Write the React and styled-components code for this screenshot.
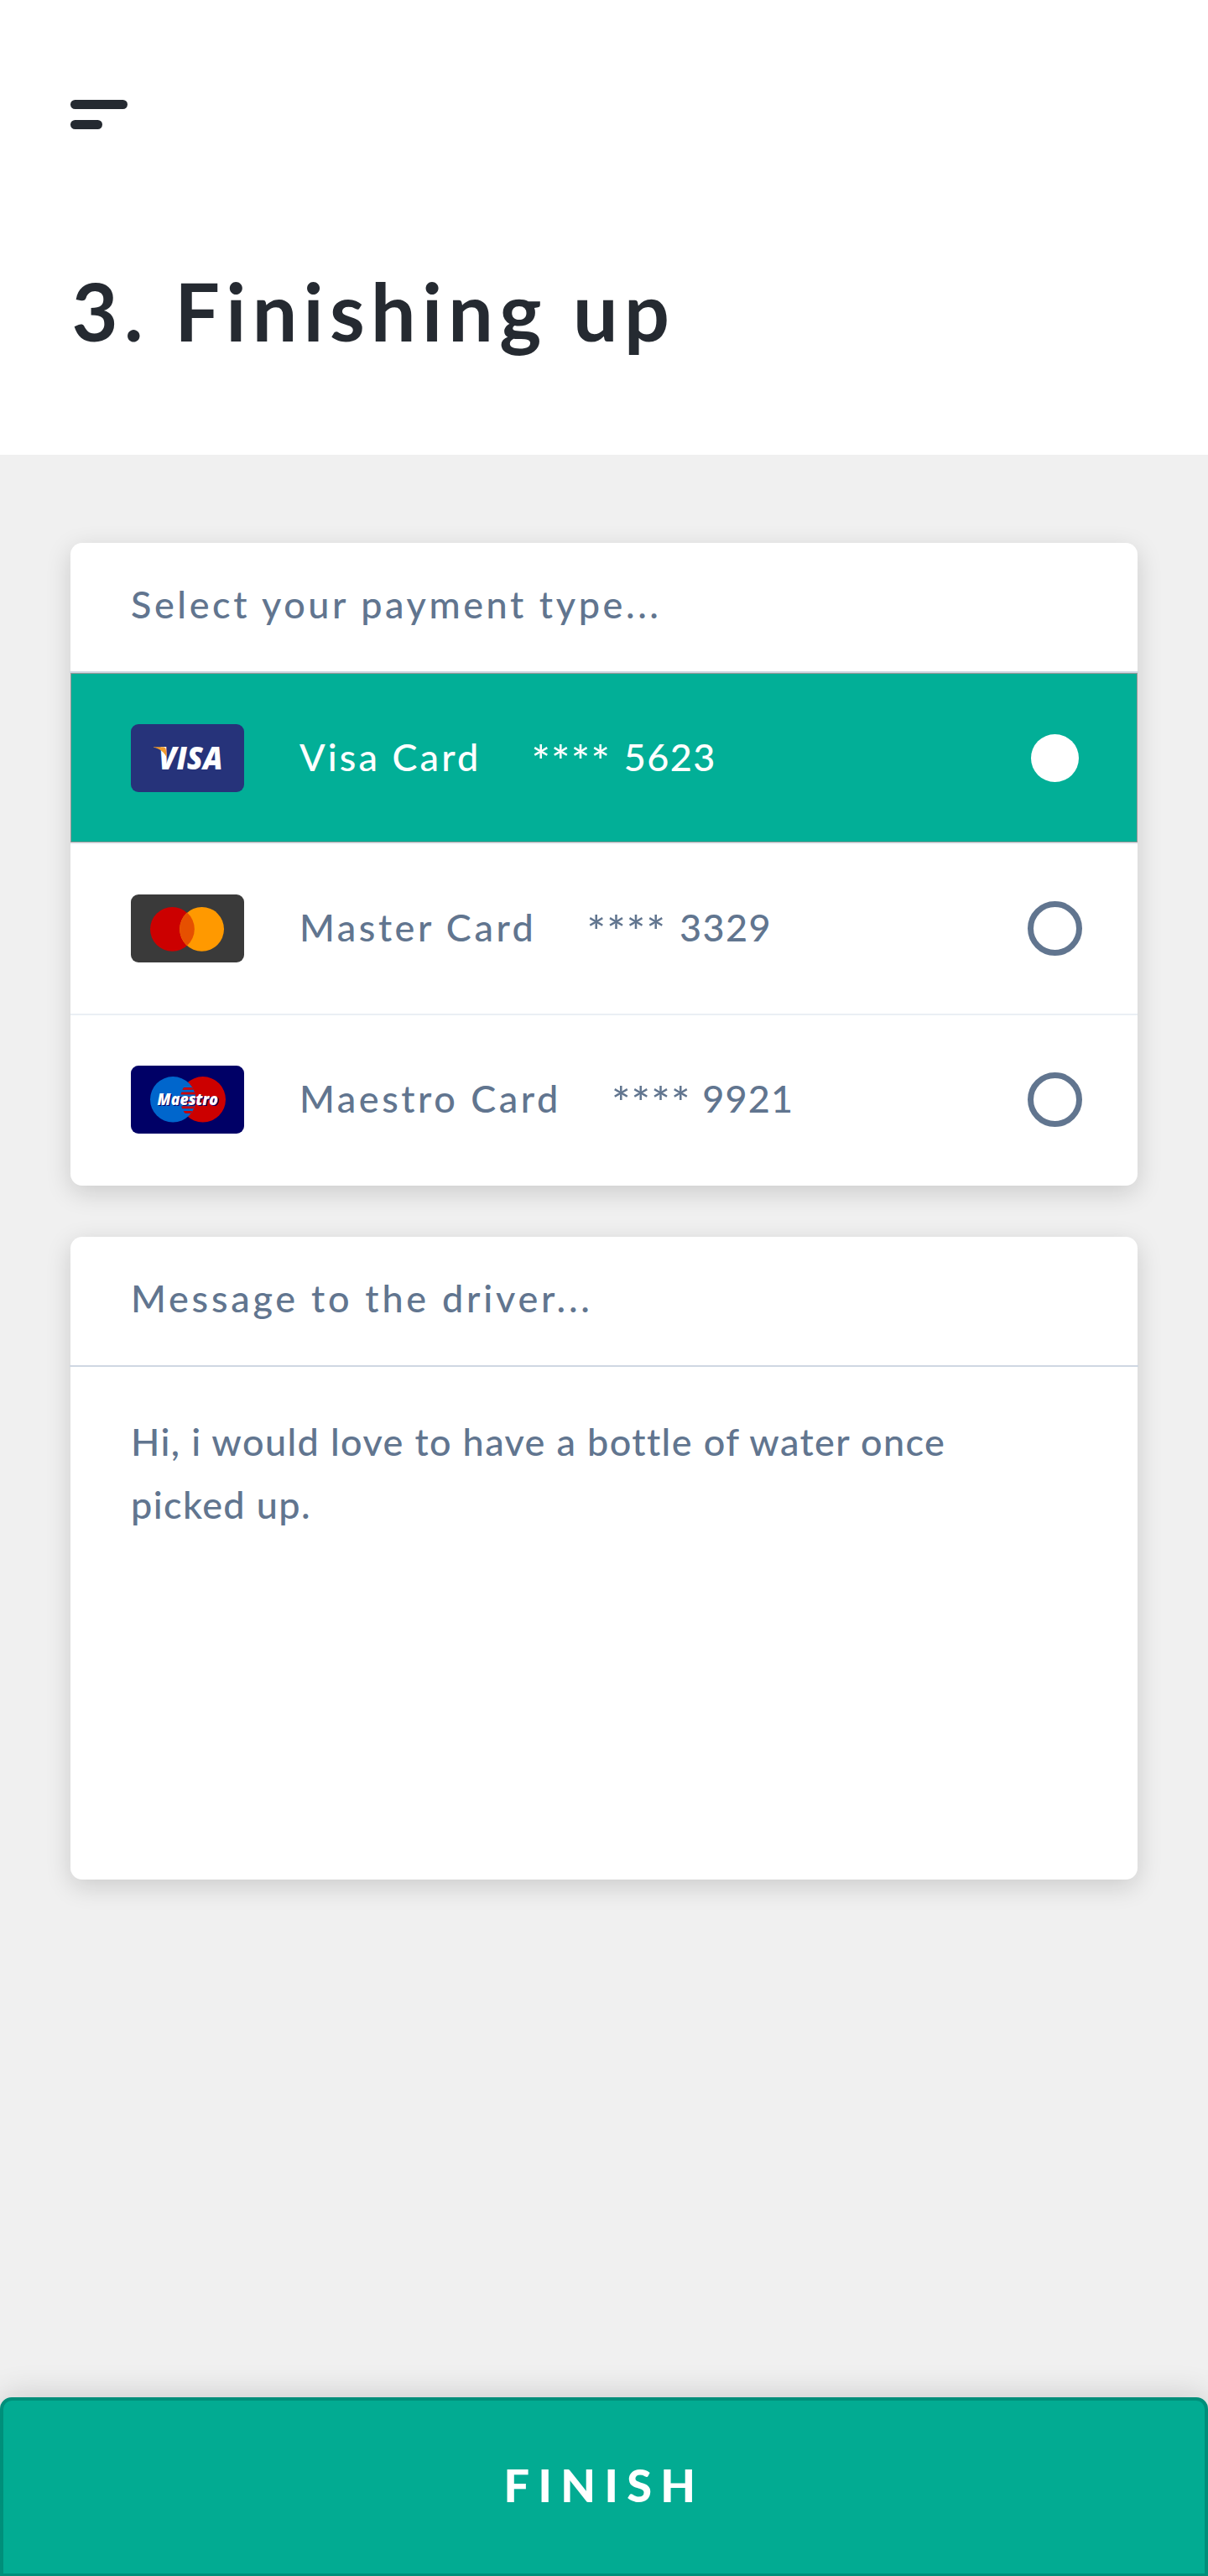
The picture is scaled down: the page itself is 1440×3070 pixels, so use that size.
import React, { useState } from 'react';
import styled, { createGlobalStyle } from 'styled-components';

const GlobalStyle = createGlobalStyle`
  * {
    box-sizing: border-box;
  }
  body {
    margin: 0;
    background: #f0f0f0;
    font-family: Lato, 'Open Sans', sans-serif;
  }
`;

const Page = styled.div`
  display: flex;
  flex-direction: column;
  width: 1440px;
  height: 3070px;
  overflow: hidden;
  background: #f0f0f0;
  color: #61758f;
`;

const Header = styled.header`
  height: 542px;
  padding: 119px 84px 0;
  background: #fff;
`;

const MenuButton = styled.button`
  display: flex;
  flex-direction: column;
  justify-content: space-between;
  width: 68px;
  height: 35px;
  padding: 0;
  border: 0;
  background: none;
`;

const MenuBar = styled.span`
  width: ${(p) => p.$width}px;
  height: 11px;
  border-radius: 5.5px;
  background: #252a31;
`;

const Title = styled.h1`
  margin: 161px 0 0 1.6px;
  font-size: 95px;
  font-weight: 700;
  line-height: 110px;
  letter-spacing: 7.3px;
  color: #252a31;
`;

const Main = styled.main`
  display: flex;
  flex-direction: column;
  gap: 61px;
  padding: 105px 84px 0;
`;

const Card = styled.section`
  border-radius: 14px;
  background: #fff;
  box-shadow: 0 8px 30px rgba(0, 0, 0, 0.155);
`;

const CardHeading = styled.h2`
  height: 153px;
  margin: 0;
  padding-left: 72px;
  font-size: 45px;
  font-weight: 500;
  line-height: 147px;
  letter-spacing: ${(p) => p.$spacing}px;
`;

const Divider = styled.div`
  height: 2px;
  margin: 0 ${(p) => (p.$strong ? '-1px' : '0')};
  background: ${(p) => (p.$strong ? '#cfd7e2' : '#eaeff4')};
`;

const PaymentRow = styled.div`
  display: flex;
  align-items: flex-start;
  height: ${(p) => (p.$last ? 203 : 202)}px;
  padding: ${(p) => (p.$first ? 61 : 60)}px 66px 0 72px;
  border-radius: ${(p) => (p.$last ? '0 0 14px 14px' : '0')};
  background: ${(p) => (p.$selected ? '#02af97' : 'transparent')};
  box-shadow: ${(p) => (p.$selected ? 'inset 0 0 0 1px #979797' : 'none')};
  color: ${(p) => (p.$selected ? '#fff' : 'inherit')};
  font-size: 45px;
  font-weight: 500;
  line-height: 78px;
  cursor: pointer;
`;

const Logo = styled.svg`
  flex: none;
  width: 135px;
  height: 81px;
  margin-right: 66px;
`;

const CardName = styled.span`
  margin-right: 60px;
  letter-spacing: ${(p) => p.$spacing}px;
`;

const CardNumber = styled.span`
  display: flex;
  gap: ${(p) => p.$gap}px;
`;

const Mask = styled.span`
  margin-top: 4px;
  font-size: 53px;
  letter-spacing: 1.2px;
`;

const Digits = styled.span`
  letter-spacing: ${(p) => p.$spacing}px;
`;

const Radio = styled.span`
  display: flex;
  align-items: center;
  justify-content: center;
  width: 65px;
  height: 65px;
  margin: 8px 0 0 auto;
  border-radius: 50%;
  border: ${(p) => (p.$checked ? '0' : '7px solid #61758f')};
`;

const RadioDot = styled.span`
  width: 57px;
  height: 57px;
  border-radius: 50%;
  background: #fff;
`;

const Message = styled.p`
  height: 611px;
  margin: 0;
  padding: 52px 180px 0 72px;
  font-size: 45px;
  font-weight: 500;
  line-height: 75px;
  letter-spacing: 1.37px;
`;

const FinishButton = styled.button`
  height: 213px;
  margin-top: auto;
  padding: 0 0 4px;
  border: 4px solid #008f7a;
  border-bottom-width: 3px;
  border-radius: 14px 14px 0 0;
  background: #02ab92;
  box-shadow: 0 -2px 38px rgba(0, 0, 0, 0.16);
  color: #fff;
  font-family: inherit;
  font-size: 54px;
  font-weight: 900;
  line-height: 64px;
  letter-spacing: 10.4px;
`;

function VisaLogo() {
  return (
    <Logo viewBox="0 0 135 81" aria-label="Visa">
      <rect width="135" height="81" rx="9" fill="#26337a" />
      <text
        x="33"
        y="53.5"
        fill="#fff"
        fontFamily="'Open Sans', sans-serif"
        fontSize="36.5"
        fontWeight="800"
        fontStyle="italic"
        textLength="76.5"
        lengthAdjust="spacingAndGlyphs"
      >
        VISA
      </text>
      <path d="M26 26 L35 26 L35 33 L26 29 Z" fill="#26337a" />
      <path d="M27 27.2 L38.5 27.2 Q41.2 27.2 41.7 30 L43.3 41 C40.5 33.5 34 29 27 27.8 Z" fill="#ef9b2d" />
    </Logo>
  );
}

function MastercardLogo() {
  return (
    <Logo viewBox="0 0 135 81" aria-label="Mastercard">
      <rect width="135" height="81" rx="9" fill="#3a3a3a" />
      <circle cx="49.4" cy="41.3" r="26.4" fill="#cc0000" />
      <circle cx="84.6" cy="41.3" r="26.4" fill="#ff9900" />
      <path d="M67 21.6 A26.4 26.4 0 0 1 67 61 A26.4 26.4 0 0 1 67 21.6 Z" fill="#e65000" />
    </Logo>
  );
}

function MaestroLogo() {
  const stripes = [26, 31.6, 37.2, 42.8, 48.4, 54];
  return (
    <Logo viewBox="0 0 135 81" aria-label="Maestro">
      <defs>
        <clipPath id="maestro-overlap">
          <path d="M68 19.9 A27.2 27.2 0 0 1 68 60.7 A27.2 27.2 0 0 1 68 19.9 Z" />
        </clipPath>
      </defs>
      <rect width="135" height="81" rx="9" fill="#000066" />
      <circle cx="85.8" cy="40.3" r="27.2" fill="#cc0000" />
      <circle cx="50.2" cy="40.3" r="27.2" fill="#0066cc" />
      <g clipPath="url(#maestro-overlap)" fill="#cc0000">
        {stripes.map((y) => (
          <rect key={y} x="56" y={y} width="24" height="2.8" />
        ))}
      </g>
      <g
        fontFamily="'Open Sans', sans-serif"
        fontSize="19.5"
        fontWeight="800"
        fontStyle="italic"
      >
        <text x="32.8" y="48.3" fill="#000066" textLength="72.5" lengthAdjust="spacingAndGlyphs">
          Maestro
        </text>
        <text x="31.6" y="47.1" fill="#fff" textLength="72.5" lengthAdjust="spacingAndGlyphs">
          Maestro
        </text>
      </g>
    </Logo>
  );
}

const paymentTypes = [
  { id: 'visa', logo: VisaLogo, name: 'Visa Card', digits: '5623', nameSpacing: 3.1, digitSpacing: 1.4, gap: 15.4 },
  { id: 'mastercard', logo: MastercardLogo, name: 'Master Card', digits: '3329', nameSpacing: 3.52, digitSpacing: 1.4, gap: 15.8 },
  { id: 'maestro', logo: MaestroLogo, name: 'Maestro Card', digits: '9921', nameSpacing: 3.53, digitSpacing: 1.2, gap: 13.4 },
];

export default function App() {
  const [selected, setSelected] = useState('visa');

  return (
    <Page>
      <GlobalStyle />
      <Header>
        <MenuButton aria-label="Menu">
          <MenuBar $width={68} />
          <MenuBar $width={37.5} />
        </MenuButton>
        <Title>3. Finishing up</Title>
      </Header>
      <Main>
        <Card>
          <CardHeading $spacing={3.58}>Select your payment type...</CardHeading>
          <Divider $strong />
          {paymentTypes.map((type, index) => {
            const isSelected = type.id === selected;
            const isLast = index === paymentTypes.length - 1;
            const TypeLogo = type.logo;
            return (
              <React.Fragment key={type.id}>
                <PaymentRow
                  $selected={isSelected}
                  $first={index === 0}
                  $last={isLast}
                  onClick={() => setSelected(type.id)}
                >
                  <TypeLogo />
                  <CardName $spacing={type.nameSpacing}>{type.name}</CardName>
                  <CardNumber $gap={type.gap}>
                    <Mask>****</Mask>
                    <Digits $spacing={type.digitSpacing}>{type.digits}</Digits>
                  </CardNumber>
                  <Radio $checked={isSelected}>{isSelected && <RadioDot />}</Radio>
                </PaymentRow>
                {!isLast && <Divider />}
              </React.Fragment>
            );
          })}
        </Card>
        <Card>
          <CardHeading $spacing={3.75}>Message to the driver...</CardHeading>
          <Divider $strong />
          <Message>Hi, i would love to have a bottle of water once picked up.</Message>
        </Card>
      </Main>
      <FinishButton>FINISH</FinishButton>
    </Page>
  );
}
